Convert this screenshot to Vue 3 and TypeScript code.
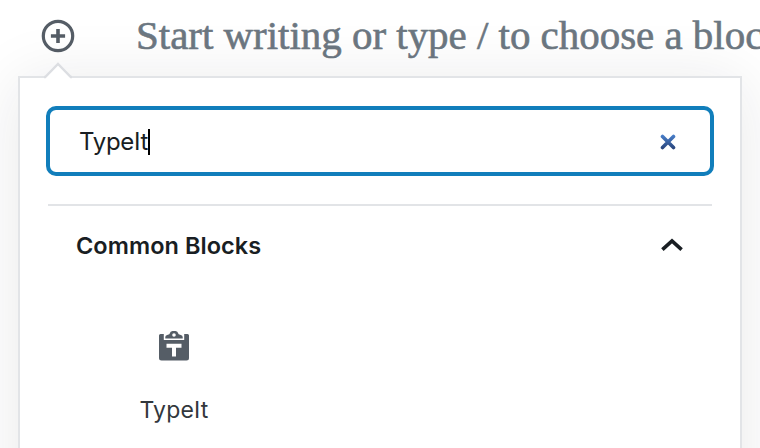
<script setup lang="ts">
import { ref } from 'vue'

const query = ref('TypeIt')
const open = ref(true)
const blocks = ['TypeIt']
</script>

<template>
  <main class="editor">
    <header class="prompt">
      <button class="inserter" aria-label="Add block">
        <svg width="34" height="34" viewBox="0 0 34 34" fill="none" stroke="#555d66">
          <circle cx="17" cy="17" r="14.7" stroke-width="3.2" />
          <path d="M17 9.9v14.2M9.9 17h14.2" stroke-width="3.6" />
        </svg>
      </button>
      <p class="placeholder">Start writing or type / to choose a block</p>
    </header>

    <section class="popover">
      <svg class="arrow" width="28" height="17" viewBox="0 0 28 17">
        <path d="M0 17L14 2L28 17Z" fill="#fff" />
        <path d="M0 15H1.2L14 2L26.8 15H28" fill="none" stroke="#dcdee2" stroke-width="2.4" />
      </svg>
      <div class="search" role="searchbox">
        <span class="query">{{ query }}</span><span class="caret"></span>
        <button class="clear" aria-label="Clear" @click="query = ''">
          <svg width="16" height="16" viewBox="0 0 16 16">
            <defs>
              <linearGradient id="clear-fill" x1="0" y1="0" x2="0" y2="16" gradientUnits="userSpaceOnUse">
                <stop offset="0" stop-color="#4b83d0" />
                <stop offset="1" stop-color="#263f73" />
              </linearGradient>
            </defs>
            <path d="M2.5 2.5L13.5 13.5M13.5 2.5L2.5 13.5" stroke="url(#clear-fill)" stroke-width="3.6" stroke-linecap="round" />
          </svg>
        </button>
      </div>
      <div class="panel">
        <button class="title" @click="open = !open">
          <span>Common Blocks</span>
          <svg width="24" height="16" viewBox="0 0 24 16" fill="none" stroke="#191e23" stroke-width="3.6">
            <path d="M2.4 12.7L12 3.9L21.6 12.7" />
          </svg>
        </button>
        <ul v-if="open" class="blocks">
          <li v-for="block in blocks" :key="block" class="block">
            <svg width="30" height="30" viewBox="0 0 30 30">
              <path fill="#555d66" fill-rule="evenodd" d="M1.5 3H4.8V9H25.2V3H28.5Q30 3 30 4.5V27Q30 29.5 27.5 29.5H2.5Q0 29.5 0 27V4.5Q0 3 1.5 3ZM7.5 12.8V16.8H13V25.5H17V16.8H22.5V12.8Z" />
              <path fill="#555d66" fill-rule="evenodd" d="M6.3 7.4V6Q6.3 4.6 8.2 4L10.3 3.2Q11.5 0 13.5 0H16.5Q18.5 0 19.7 3.2L21.8 4Q23.7 4.6 23.7 6V7.4ZM15 2.2A1.8 1.8 0 1 0 15 5.8A1.8 1.8 0 1 0 15 2.2Z" />
            </svg>
            <span>{{ block }}</span>
          </li>
        </ul>
      </div>
    </section>
  </main>
</template>

<style>
body {
  background: #fff;
  overflow: hidden;
}
</style>

<style scoped>
.editor {
  box-sizing: border-box;
  width: 760px;
  height: 448px;
  overflow: hidden;
  font-family: Inter, "Liberation Sans", sans-serif;
  color: #191e23;
}
button {
  border: 0;
  padding: 0;
  background: none;
  font: inherit;
  color: inherit;
}
svg {
  display: block;
}
.prompt {
  display: flex;
  height: 76px;
  padding-left: 41px;
}
.inserter {
  width: 34px;
  height: 34px;
  margin-top: 19px;
}
.placeholder {
  flex: none;
  margin: 11px 0 0 61px;
  font: 41px/48px "Liberation Serif", serif;
  letter-spacing: -0.03px;
  white-space: nowrap;
  color: #6c7781;
  -webkit-text-stroke: 0.6px #6c7781;
}
.popover {
  position: relative;
  box-sizing: border-box;
  width: 724px;
  height: 800px;
  margin-left: 18px;
  padding: 28px 26px 0;
  border: 2px solid #e2e4e7;
  background: #fff;
  box-shadow: 0 6px 60px rgba(25, 30, 35, 0.1);
}
.arrow {
  position: absolute;
  left: 24px;
  top: -16px;
}
.search {
  display: flex;
  align-items: center;
  box-sizing: border-box;
  width: 668px;
  height: 70px;
  padding: 1px 34px 0 29px;
  border: 4px solid #117ebb;
  border-radius: 10px;
  font-size: 24px;
}
.query {
  letter-spacing: -0.3px;
}
.caret {
  width: 2px;
  height: 26px;
  background: #000;
}
.clear {
  margin-left: auto;
}
.panel {
  margin: 28px 2px 0;
  border-top: 2px solid #e2e4e7;
}
.title {
  display: flex;
  align-items: center;
  justify-content: space-between;
  width: 100%;
  height: 78px;
  padding: 0 28px;
  font-size: 23.5px;
  font-weight: 600;
  letter-spacing: 0.05px;
}
.blocks {
  display: flex;
  margin: 0;
  padding: 47px 28px 0;
  list-style: none;
}
.block {
  display: flex;
  flex-direction: column;
  align-items: center;
  width: 196px;
  font-size: 23px;
  line-height: 28px;
  color: #32373c;
}
.block span {
  margin-top: 35px;
  letter-spacing: 0.2px;
}
</style>
